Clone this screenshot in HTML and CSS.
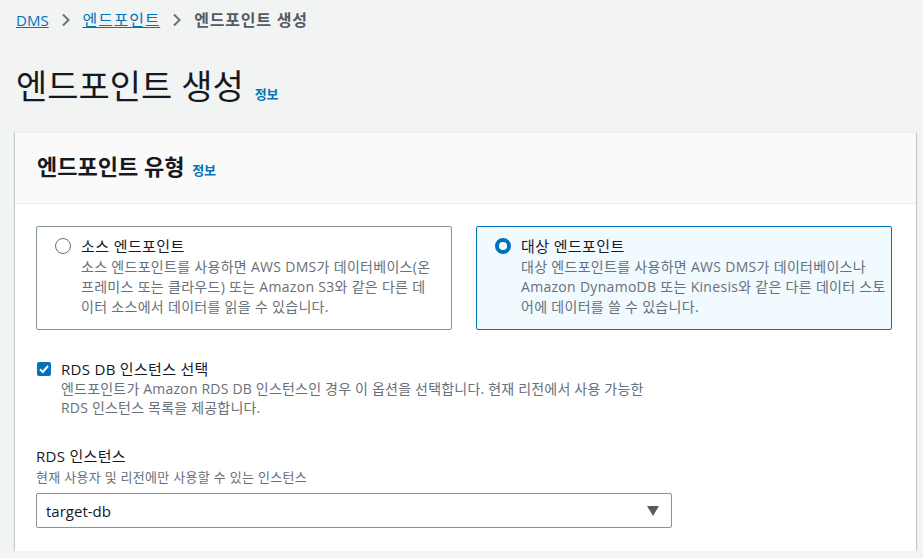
FILE: index.html
```html
<!DOCTYPE html>
<html>
  <head>
    <meta charset="utf-8" />
    <title>엔드포인트 생성</title>
    <link rel="stylesheet" href="styles.css">
  </head>
  <body>
    <div class="page">
      <nav class="breadcrumbs">
        <a href="#">DMS</a>
        <svg class="chevron" viewBox="0 0 10 14" width="10" height="14"><path d="M2 1.5 L7.5 7 L2 12.5" /></svg>
        <a class="ko" href="#">엔드포인트</a>
        <svg class="chevron" viewBox="0 0 10 14" width="10" height="14"><path d="M2 1.5 L7.5 7 L2 12.5" /></svg>
        <span class="current ko">엔드포인트 생성</span>
      </nav>

      <h1 class="title">엔드포인트 생성 <a class="info" href="#">정보</a></h1>

      <div class="card">
        <div class="card-header">
          <h2>엔드포인트 유형 <a class="info" href="#">정보</a></h2>
        </div>
        <div class="card-body">
          <div class="tiles">
            <label class="tile">
              <span class="radio"></span>
              <span class="tile-text">
                <span class="tile-title">소스 엔드포인트</span>
                <span class="tile-desc">소스 엔드포인트를 사용하면 AWS DMS가 데이터베이스(온<br>프레미스 또는 클라우드) 또는 Amazon S3와 같은 다른 데<br>이터 소스에서 데이터를 읽을 수 있습니다.</span>
              </span>
            </label>
            <label class="tile selected">
              <span class="radio"></span>
              <span class="tile-text">
                <span class="tile-title">대상 엔드포인트</span>
                <span class="tile-desc">대상 엔드포인트를 사용하면 AWS DMS가 데이터베이스나<br>Amazon DynamoDB 또는 Kinesis와 같은 다른 데이터 스토<br>어에 데이터를 쓸 수 있습니다.</span>
              </span>
            </label>
          </div>

          <div class="check-row">
            <span class="checkbox">
              <svg viewBox="0 0 14 14" width="14" height="14"><path d="M3 7.2 L5.8 10 L11 4" /></svg>
            </span>
            <div>
              <div class="check-label">RDS DB 인스턴스 선택</div>
              <div class="check-desc">엔드포인트가 Amazon RDS DB 인스턴스인 경우 이 옵션을 선택합니다. 현재 리전에서 사용 가능한<br>RDS 인스턴스 목록을 제공합니다.</div>
            </div>
          </div>

          <div class="field">
            <div class="field-label">RDS 인스턴스</div>
            <div class="field-hint">현재 사용자 및 리전에만 사용할 수 있는 인스턴스</div>
            <div class="select">
              <span>target-db</span>
              <svg viewBox="0 0 12 10" width="12" height="10"><path d="M0 0 H12 L6 10 Z" /></svg>
            </div>
          </div>
        </div>
      </div>
    </div>
  </body>
</html>
```

FILE: styles.css
```css
* {
  box-sizing: border-box;
}
body {
  margin: 0;
  background: #f2f3f3;
  color: #16191f;
  font-family: 'Open Sans', 'Noto Sans CJK KR', sans-serif;
  font-size: 14px;
  line-height: 20px;
}
a {
  color: #0073bb;
}
.page {
  padding: 0 7px 0 15px;
}
.breadcrumbs {
  display: flex;
  align-items: center;
  gap: 11px;
  height: 20px;
  margin-top: 10px;
  font-size: 15px;
  padding-left: 1px;
}
.breadcrumbs .ko {
  font-size: 16px;
  letter-spacing: 0.8px;
}
.breadcrumbs a {
  text-decoration: underline;
}
.breadcrumbs .current {
  color: #545b64;
  font-weight: 700;
}
.chevron {
  fill: none;
  stroke: #687078;
  stroke-width: 2;
  margin: 0 1px;
}
.title {
  margin: 36px 0 0 1px;
  height: 66px;
  font-size: 34px;
  font-weight: 400;
  line-height: 40px;
}
.title .info,
.card-header .info {
  font-size: 13px;
  font-weight: 700;
  text-decoration: none;
  margin-left: 2px;
}
.card {
  background: #fff;
  width: 901px;
  box-shadow: 0 1px 1px 0 rgba(0, 28, 36, 0.3), 1px 1px 1px 0 rgba(0, 28, 36, 0.15),
    -1px 1px 1px 0 rgba(0, 28, 36, 0.15);
  border-top: 1px solid #eaeded;
}
.card-header {
  background: #fafafa;
  border-bottom: 1px solid #eaeded;
  height: 71px;
  padding: 0 22px;
  display: flex;
  align-items: center;
}
.card-header h2 {
  margin: 0;
  font-size: 22px;
  font-weight: 700;
  line-height: 26px;
}
.card-body {
  padding: 22px 24px 23px 21px;
}
.tiles {
  display: grid;
  grid-template-columns: repeat(2, minmax(0, 1fr));
  gap: 24px;
}
.tile {
  display: flex;
  gap: 10px;
  border: 1px solid #879596;
  border-radius: 2px;
  padding: 8px 18px 12px 18px;
  cursor: pointer;
  overflow: hidden;
}
.tile.selected {
  border-color: #0073bb;
  background: #f1faff;
}
.radio {
  flex: none;
  width: 16px;
  height: 16px;
  margin-top: 3px;
  border: 1px solid #687078;
  border-radius: 50%;
  background: #fff;
}
.tile.selected .radio {
  border: 4px solid #0073bb;
}
.tile-text {
  display: flex;
  flex-direction: column;
}
.tile-title {
  font-size: 15px;
  line-height: 22px;
  letter-spacing: 0.4px;
}
.tile-desc {
  color: #687078;
  line-height: 20px;
  white-space: nowrap;
  letter-spacing: 0.3px;
}
.check-row {
  display: flex;
  gap: 10px;
  margin-top: 29px;
  padding-left: 1px;
}
.checkbox {
  flex: none;
  width: 14px;
  height: 14px;
  margin-top: 3px;
  border-radius: 2px;
  background: #0073bb;
  display: flex;
}
.checkbox path {
  fill: none;
  stroke: #fff;
  stroke-width: 2;
}
.check-label {
  font-size: 15px;
  line-height: 20px;
  letter-spacing: 0.3px;
}
.check-desc {
  color: #687078;
  line-height: 19px;
  letter-spacing: 0.2px;
}
.field {
  margin-top: 28px;
}
.field-label {
  font-size: 15px;
  line-height: 22px;
  letter-spacing: 0.3px;
}
.field-hint {
  color: #687078;
  font-size: 13px;
  line-height: 20px;
  letter-spacing: 0.3px;
}
.select {
  margin-top: 6px;
  width: 636px;
  height: 35px;
  border: 1px solid #879596;
  border-radius: 2px;
  display: flex;
  align-items: center;
  justify-content: space-between;
  padding: 0 12px 0 9px;
  font-size: 15px;
}
.select svg {
  fill: #545b64;
}
```
